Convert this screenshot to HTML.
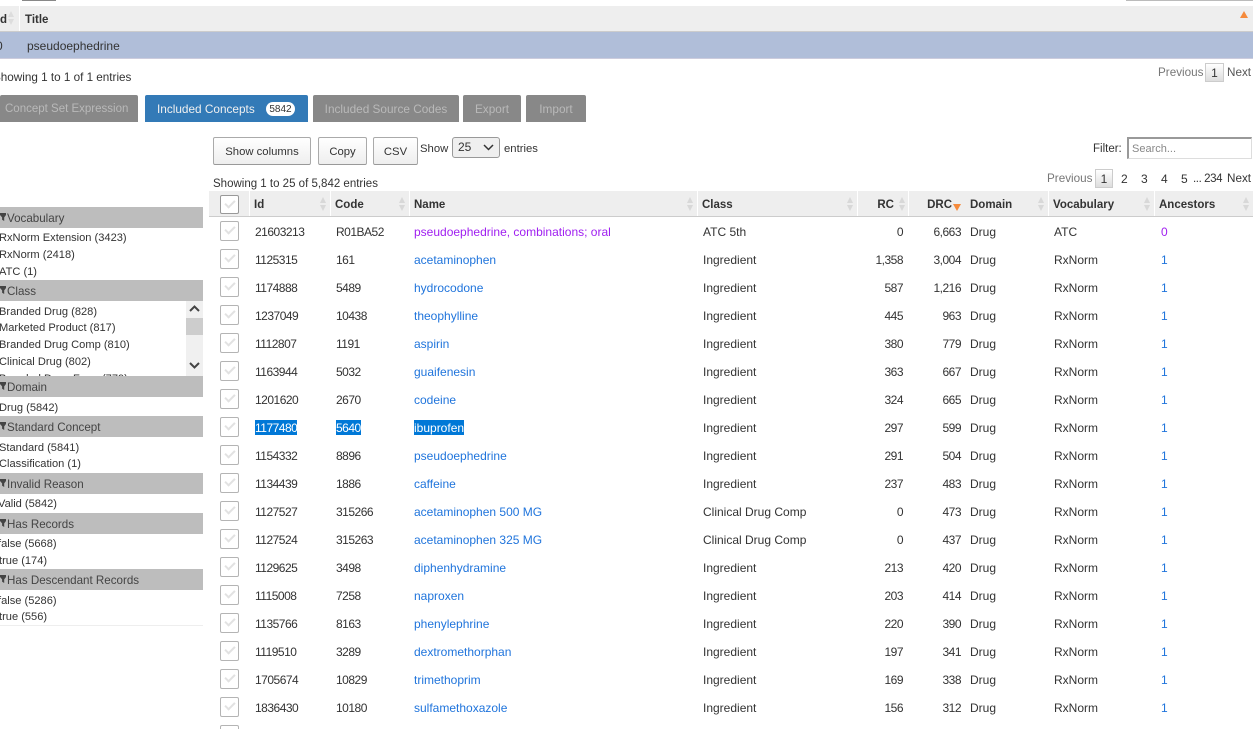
<!DOCTYPE html>
<html style="height:729px;overflow:hidden"><head><meta charset="utf-8"><style>
html,body{margin:0;padding:0;background:#fff}
body{width:1255px;height:729px;overflow:hidden;position:relative;font-family:"Liberation Sans",sans-serif;font-size:12px;color:#333}
#w{position:absolute;left:0;top:0;width:1255px;height:729px;overflow:hidden}
.a{position:absolute;white-space:nowrap}
.t{position:absolute;white-space:nowrap;line-height:16px;height:16px}
.tab{position:absolute;top:95px;height:27px;line-height:28px;background:#888;color:#b9b9b9;text-align:center;border-radius:2px 2px 0 0;font-size:11.800px;white-space:nowrap}
.btn{position:absolute;top:137px;height:26px;line-height:28px;border:1px solid #aaa;background:linear-gradient(#fff,#eee);text-align:center;border-radius:2px;font-size:11.300px;color:#333;border-bottom-color:#999;white-space:nowrap}
.h{position:absolute;left:0;width:203px;height:21px;line-height:23px;background:#bdbdbd;color:#444;font-size:11.600px;padding-left:7px;box-sizing:border-box;white-space:nowrap}
.h:before{content:"";position:absolute;left:0;top:6px;width:6px;height:8px;background:#444;clip-path:polygon(0 0,100% 0,100% 25%,70% 55%,70% 100%,35% 85%,35% 55%,0 25%)}
.f{position:absolute;left:-1px;height:16px;line-height:18px;font-size:11.100px;color:#333;white-space:nowrap}
.th{position:absolute;top:191px;height:25px;line-height:28px;background:#eee;font-weight:bold;font-size:11.500px;color:#333;box-sizing:border-box;padding-left:4px;white-space:nowrap}
.th i{position:absolute;right:3px;top:6px;width:7px;height:14px}
.th i:before{content:"";position:absolute;left:0;top:0;border-left:3.500px solid transparent;border-right:3.500px solid transparent;border-bottom:6px solid #d8d8d8}
.th i:after{content:"";position:absolute;left:0;top:8px;border-left:3.500px solid transparent;border-right:3.500px solid transparent;border-top:6px solid #d8d8d8}
.r{position:absolute;left:0;width:1255px;height:28px;line-height:30px;font-size:12px;color:#333}
.r span{position:absolute;white-space:nowrap;top:0}
.r b{position:absolute;left:220px;top:4px;width:17px;height:18px;border:1px solid #b4b4b4;border-radius:2px;background:#fff;font-weight:normal}
b:after,.cb:after{content:"";position:absolute;left:4px;top:4px;width:8px;height:4px;border-left:2px solid #e2e2e2;border-bottom:2px solid #e2e2e2;transform:rotate(-45deg)}
.i,.c,.rc,.drc{letter-spacing:-.5px}
.i{left:255px}.c{left:336px}.n{left:414px;color:#1f74dc}.k{left:703px}
.rc{right:352px}.drc{right:294px}.d{left:970px}.v{left:1054px}.an{left:1161px;color:#1f74dc}
.sel{background:#0078d7;color:#fff;height:15px;line-height:16px;top:7px!important}
</style></head><body><div id="w">

<div class="a" style="left:22px;top:0;width:34px;height:1px;background:#888"></div>
<div class="a" style="left:1126px;top:0;width:127px;height:1px;background:#bbb"></div>

<div class="a" style="left:0;top:6px;width:1253px;height:25px;background:#eee;border-bottom:1px solid #ccc"></div>
<div class="a" style="left:19px;top:6px;width:1px;height:25px;background:#fff"></div>
<div class="t" style="left:0;top:12px;font-weight:bold;font-size:11.500px">d</div>
<div class="a" style="left:8px;top:11px;border-left:3.500px solid transparent;border-right:3.500px solid transparent;border-bottom:6px solid #ddd"></div>
<div class="a" style="left:8px;top:19px;border-left:3.500px solid transparent;border-right:3.500px solid transparent;border-top:6px solid #ddd"></div>
<div class="t" style="left:25px;top:12px;font-weight:bold;font-size:11.500px">Title</div>
<div class="a" style="left:1240px;top:11px;border-left:4px solid transparent;border-right:4px solid transparent;border-bottom:7px solid #f58a3c"></div>
<div class="a" style="left:0;top:32px;width:1253px;height:26px;background:#b0bed9;border-bottom:1px solid #ccd"></div>
<div class="t" style="left:-4px;top:38px;font-size:12px">0</div>
<div class="t" style="left:27px;top:38px;font-size:12px">pseudoephedrine</div>
<div class="t" style="left:-7px;top:70px;font-size:11.700px">Showing 1 to 1 of 1 entries</div>
<div class="t" style="left:1158px;top:65px;color:#777;font-size:11.700px">Previous</div>
<div class="a" style="left:1205px;top:63px;width:17px;height:17px;line-height:18px;text-align:center;border:1px solid #ccc;background:linear-gradient(#fff,#ddd);font-size:12px">1</div>
<div class="t" style="left:1227px;top:65px;color:#555;font-size:11.700px">Next</div>

<div class="tab" style="left:0;width:138px;padding-left:5px;text-align:left;box-sizing:border-box;font-size:11.500px;line-height:29px">Concept Set Expression</div>
<div class="tab" style="left:145px;width:163px;text-align:left;background:#337ab7;color:#f0f0f0"><span style="margin-left:12px">Included Concepts</span></div>
<div class="a" style="left:266px;top:102px;width:29px;height:14px;line-height:15px;border-radius:8px;background:#fff;color:#333;text-align:center;font-size:10px">5842</div>
<div class="tab" style="left:313px;width:146px">Included Source Codes</div>
<div class="tab" style="left:463px;width:58px">Export</div>
<div class="tab" style="left:526px;width:60px">Import</div>

<div class="btn" style="left:213px;width:96px">Show columns</div>
<div class="btn" style="left:318px;width:47px">Copy</div>
<div class="btn" style="left:373px;width:43px">CSV</div>
<div class="t" style="left:420px;top:141px;font-size:11.300px">Show</div>
<div class="a" style="left:452px;top:137px;width:46px;height:19px;line-height:19px;border:1px solid #999;border-radius:3px;background:#efefef;font-size:12px;text-indent:5px">25</div>
<svg class="a" style="left:483px;top:144px" width="11" height="7"><path d="M1 1l4.500 4.500L10 1" fill="none" stroke="#333" stroke-width="1.500"/></svg>
<div class="t" style="left:504px;top:141px;font-size:11.300px">entries</div>
<div class="t" style="left:1093px;top:141px;font-size:11.500px">Filter:</div>
<div class="a" style="left:1127px;top:137px;width:122px;height:19px;line-height:20px;border:1px solid #ddd;border-top:2px solid #999;border-left:2px solid #999;background:#fff;color:#888;font-size:11px;text-indent:3px">Search...</div>
<div class="t" style="left:213px;top:176px;font-size:11.500px">Showing 1 to 25 of 5,842 entries</div>
<div class="t" style="left:1047px;top:171px;color:#777;font-size:11.700px">Previous</div>
<div class="a" style="left:1095px;top:169px;width:16px;height:17px;line-height:18px;text-align:center;border:1px solid #ccc;background:linear-gradient(#fff,#ddd);font-size:12px">1</div>
<div class="t" style="left:1121px;top:171px;font-size:12px">2</div>
<div class="t" style="left:1141px;top:171px;font-size:12px">3</div>
<div class="t" style="left:1161px;top:171px;font-size:12px">4</div>
<div class="t" style="left:1181px;top:171px;font-size:12px">5</div>
<div class="t" style="left:1193px;top:171px;font-size:11.500px;letter-spacing:-.4px">... 234</div>
<div class="t" style="left:1227px;top:171px;font-size:11.700px">Next</div>

<div class="h" style="top:207px">Vocabulary</div>
<div class="f" style="top:229px">RxNorm Extension (3423)</div>
<div class="f" style="top:246px">RxNorm (2418)</div>
<div class="f" style="top:263px">ATC (1)</div>
<div class="h" style="top:280px">Class</div>
<div class="a" style="left:0;top:301px;width:203px;height:75px;overflow:hidden">
<div class="f" style="top:2px">Branded Drug (828)</div>
<div class="f" style="top:18px">Marketed Product (817)</div>
<div class="f" style="top:35px">Branded Drug Comp (810)</div>
<div class="f" style="top:52px">Clinical Drug (802)</div>
<div class="f" style="top:69px">Branded Dose Form (779)</div>
<div class="a" style="left:186px;top:0;width:17px;height:75px;background:#f0f0f0"></div>
<div class="a" style="left:186px;top:17px;width:17px;height:17px;background:#cdcdcd"></div>
<svg class="a" style="left:189px;top:3px" width="11" height="70"><path d="M1 7l4.500-4.500L10 7" fill="none" stroke="#444" stroke-width="2"/><path d="M1 59l4.500 4.500L10 59" fill="none" stroke="#444" stroke-width="2"/></svg>
</div>
<div class="h" style="top:376px">Domain</div>
<div class="f" style="top:399px">Drug (5842)</div>
<div class="h" style="top:416px">Standard Concept</div>
<div class="f" style="top:439px">Standard (5841)</div>
<div class="f" style="top:455px">Classification (1)</div>
<div class="h" style="top:473px">Invalid Reason</div>
<div class="f" style="top:495px;left:-2px">Valid (5842)</div>
<div class="h" style="top:513px">Has Records</div>
<div class="f" style="top:535px;left:-2px">false (5668)</div>
<div class="f" style="top:552px;left:-1px">true (174)</div>
<div class="h" style="top:569px">Has Descendant Records</div>
<div class="f" style="top:592px;left:-2px">false (5286)</div>
<div class="f" style="top:608px;left:-1px">true (556)</div>
<div class="a" style="left:0;top:625px;width:203px;height:1px;background:#eee"></div>

<div class="a" style="left:209px;top:191px;width:1044px;height:25px;background:#fff;border-bottom:1px solid #ccc"></div>
<div class="th" style="left:209px;width:40px"></div>
<div class="a cb" style="left:220px;top:195px;width:17px;height:17px;border:1px solid #999;border-radius:2px;background:#fff"></div>
<div class="th" style="left:250px;width:80px">Id<i></i></div>
<div class="th" style="left:331px;width:78px">Code<i></i></div>
<div class="th" style="left:410px;width:287px">Name<i></i></div>
<div class="th" style="left:698px;width:159px">Class<i></i></div>
<div class="th" style="left:858px;width:50px;text-align:right;padding-right:14px">RC<i style="right:2px"></i></div>
<div class="th" style="left:909px;width:57px;text-align:right;padding-right:14px">DRC</div>
<div class="a" style="left:953px;top:204px;border-left:4px solid transparent;border-right:4px solid transparent;border-top:7px solid #f58a3c"></div>
<div class="th" style="left:966px;width:82px">Domain<i></i></div>
<div class="th" style="left:1049px;width:105px">Vocabulary<i></i></div>
<div class="th" style="left:1155px;width:98px">Ancestors<i></i></div>

<div class="r" style="top:217px"><b></b><span class="i">21603213</span><span class="c">R01BA52</span><span class="n" style="color:#a020f0">pseudoephedrine, combinations; oral</span><span class="k">ATC 5th</span><span class="rc">0</span><span class="drc">6,663</span><span class="d">Drug</span><span class="v">ATC</span><span class="an" style="color:#a020f0">0</span></div>
<div class="r" style="top:245px"><b></b><span class="i">1125315</span><span class="c">161</span><span class="n">acetaminophen</span><span class="k">Ingredient</span><span class="rc">1,358</span><span class="drc">3,004</span><span class="d">Drug</span><span class="v">RxNorm</span><span class="an">1</span></div>
<div class="r" style="top:273px"><b></b><span class="i">1174888</span><span class="c">5489</span><span class="n">hydrocodone</span><span class="k">Ingredient</span><span class="rc">587</span><span class="drc">1,216</span><span class="d">Drug</span><span class="v">RxNorm</span><span class="an">1</span></div>
<div class="r" style="top:301px"><b></b><span class="i">1237049</span><span class="c">10438</span><span class="n">theophylline</span><span class="k">Ingredient</span><span class="rc">445</span><span class="drc">963</span><span class="d">Drug</span><span class="v">RxNorm</span><span class="an">1</span></div>
<div class="r" style="top:329px"><b></b><span class="i">1112807</span><span class="c">1191</span><span class="n">aspirin</span><span class="k">Ingredient</span><span class="rc">380</span><span class="drc">779</span><span class="d">Drug</span><span class="v">RxNorm</span><span class="an">1</span></div>
<div class="r" style="top:357px"><b></b><span class="i">1163944</span><span class="c">5032</span><span class="n">guaifenesin</span><span class="k">Ingredient</span><span class="rc">363</span><span class="drc">667</span><span class="d">Drug</span><span class="v">RxNorm</span><span class="an">1</span></div>
<div class="r" style="top:385px"><b></b><span class="i">1201620</span><span class="c">2670</span><span class="n">codeine</span><span class="k">Ingredient</span><span class="rc">324</span><span class="drc">665</span><span class="d">Drug</span><span class="v">RxNorm</span><span class="an">1</span></div>
<div class="r" style="top:413px"><b></b><span class="i sel">1177480</span><span class="c sel">5640</span><span class="n sel" style="color:#fff">ibuprofen</span><span class="k">Ingredient</span><span class="rc">297</span><span class="drc">599</span><span class="d">Drug</span><span class="v">RxNorm</span><span class="an">1</span></div>
<div class="r" style="top:441px"><b></b><span class="i">1154332</span><span class="c">8896</span><span class="n">pseudoephedrine</span><span class="k">Ingredient</span><span class="rc">291</span><span class="drc">504</span><span class="d">Drug</span><span class="v">RxNorm</span><span class="an">1</span></div>
<div class="r" style="top:469px"><b></b><span class="i">1134439</span><span class="c">1886</span><span class="n">caffeine</span><span class="k">Ingredient</span><span class="rc">237</span><span class="drc">483</span><span class="d">Drug</span><span class="v">RxNorm</span><span class="an">1</span></div>
<div class="r" style="top:497px"><b></b><span class="i">1127527</span><span class="c">315266</span><span class="n">acetaminophen 500 MG</span><span class="k">Clinical Drug Comp</span><span class="rc">0</span><span class="drc">473</span><span class="d">Drug</span><span class="v">RxNorm</span><span class="an">1</span></div>
<div class="r" style="top:525px"><b></b><span class="i">1127524</span><span class="c">315263</span><span class="n">acetaminophen 325 MG</span><span class="k">Clinical Drug Comp</span><span class="rc">0</span><span class="drc">437</span><span class="d">Drug</span><span class="v">RxNorm</span><span class="an">1</span></div>
<div class="r" style="top:553px"><b></b><span class="i">1129625</span><span class="c">3498</span><span class="n">diphenhydramine</span><span class="k">Ingredient</span><span class="rc">213</span><span class="drc">420</span><span class="d">Drug</span><span class="v">RxNorm</span><span class="an">1</span></div>
<div class="r" style="top:581px"><b></b><span class="i">1115008</span><span class="c">7258</span><span class="n">naproxen</span><span class="k">Ingredient</span><span class="rc">203</span><span class="drc">414</span><span class="d">Drug</span><span class="v">RxNorm</span><span class="an">1</span></div>
<div class="r" style="top:609px"><b></b><span class="i">1135766</span><span class="c">8163</span><span class="n">phenylephrine</span><span class="k">Ingredient</span><span class="rc">220</span><span class="drc">390</span><span class="d">Drug</span><span class="v">RxNorm</span><span class="an">1</span></div>
<div class="r" style="top:637px"><b></b><span class="i">1119510</span><span class="c">3289</span><span class="n">dextromethorphan</span><span class="k">Ingredient</span><span class="rc">197</span><span class="drc">341</span><span class="d">Drug</span><span class="v">RxNorm</span><span class="an">1</span></div>
<div class="r" style="top:665px"><b></b><span class="i">1705674</span><span class="c">10829</span><span class="n">trimethoprim</span><span class="k">Ingredient</span><span class="rc">169</span><span class="drc">338</span><span class="d">Drug</span><span class="v">RxNorm</span><span class="an">1</span></div>
<div class="r" style="top:693px"><b></b><span class="i">1836430</span><span class="c">10180</span><span class="n">sulfamethoxazole</span><span class="k">Ingredient</span><span class="rc">156</span><span class="drc">312</span><span class="d">Drug</span><span class="v">RxNorm</span><span class="an">1</span></div>
<div class="r" style="top:721px"><b></b></div>
</div></body></html>
